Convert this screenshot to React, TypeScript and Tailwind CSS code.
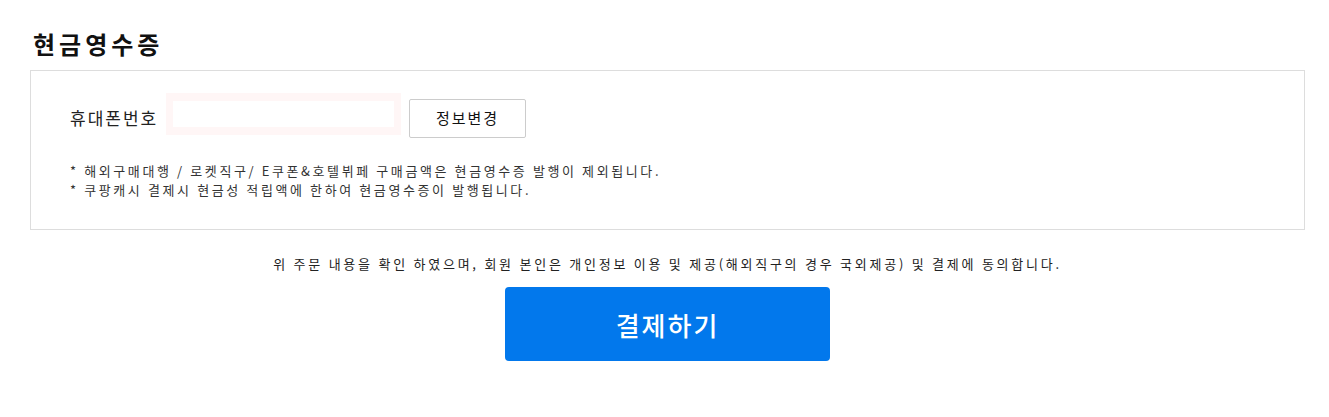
import React from "react";

export default function App() {
  const font = { fontFamily: '"Noto Sans CJK KR", "Noto Sans", sans-serif' };
  return (
    <div className="w-[1329px] h-[417px] bg-white text-[#111]" style={font}>
      <div className="pl-[30px] pr-[24px] pt-[26px]">
        <h2 className="text-[24px] font-bold leading-[36px] pl-[3px] text-[#111] tracking-[4px]">현금영수증</h2>
        <div className="mt-[8px] border border-[#dddddd] h-[160px] pl-[39px] pt-[22px]">
          <div className="flex items-start">
            <span className="text-[17px] leading-[20px] text-[#222] w-[96px] mt-[15px] tracking-[2px]">휴대폰번호</span>
            <div className="w-[235px] h-[42px] border-x-[7px] border-y-[8px] border-[#fff6f6] bg-white"></div>
            <button className="ml-[8px] w-[117px] h-[39px] border border-[#cccccc] rounded-[2px] bg-white text-[15px] text-[#111] mt-[6px] tracking-[2px]">
              정보변경
            </button>
          </div>
          <div className="mt-[23px] text-[13px] leading-[19px] text-[#333] tracking-[2.6px]">
            <p>* 해외구매대행 / 로켓직구/ E쿠폰&amp;호텔뷔페 구매금액은 현금영수증 발행이 제외됩니다.</p>
            <p>* 쿠팡캐시 결제시 현금성 적립액에 한하여 현금영수증이 발행됩니다.</p>
          </div>
        </div>
        <p className="mt-[25px] text-center text-[13px] leading-[18px] text-[#222] tracking-[2.75px]">
          위 주문 내용을 확인 하였으며, 회원 본인은 개인정보 이용 및 제공(해외직구의 경우 국외제공) 및 결제에 동의합니다.
        </p>
        <div className="mt-[14px] flex justify-center">
          <button className="w-[325px] h-[74px] rounded-[4px] bg-[#0278ec] text-white text-[26px] font-medium tracking-[2px]">
            결제하기
          </button>
        </div>
      </div>
    </div>
  );
}
